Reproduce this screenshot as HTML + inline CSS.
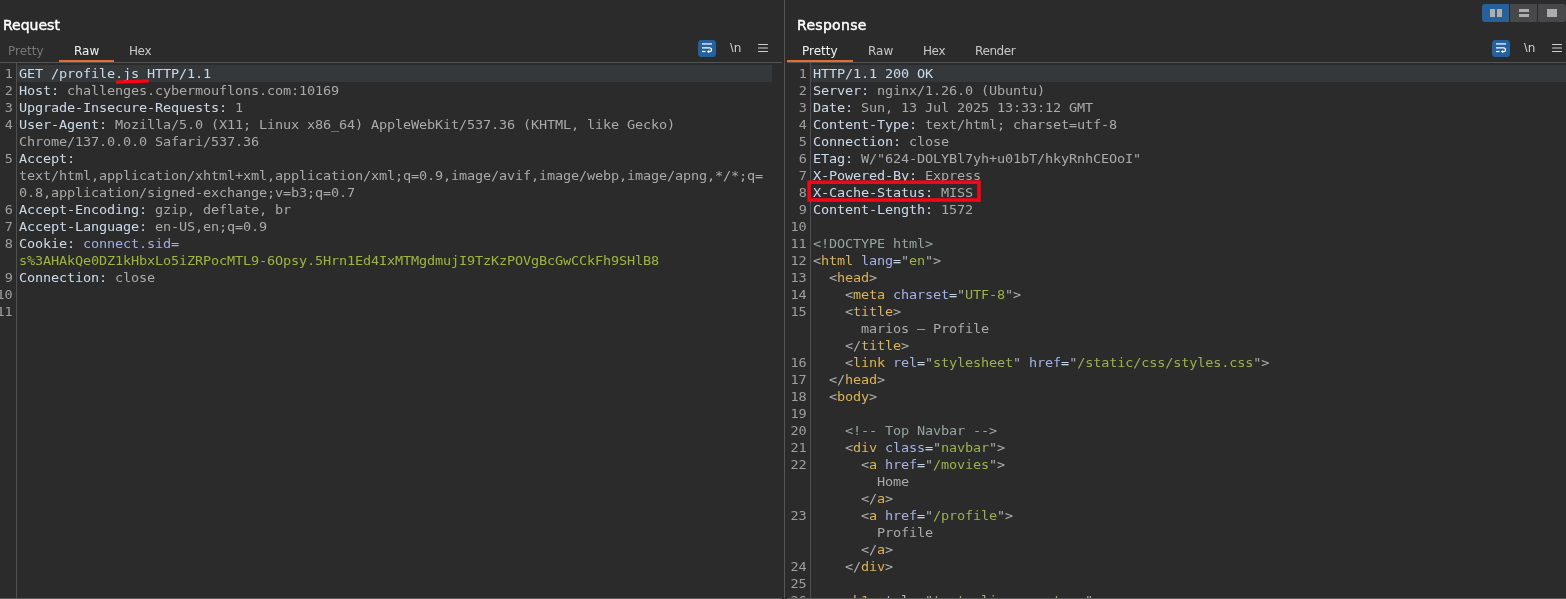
<!DOCTYPE html>
<html lang="en">
<head>
<meta charset="utf-8">
<title>Burp Repeater</title>
<style>
html,body{margin:0;padding:0;}
body{width:1566px;height:599px;background:#2b2b2b;overflow:hidden;position:relative;
  font-family:"DejaVu Sans","Liberation Sans",sans-serif;}
.abs{position:absolute;}
#app{position:absolute;left:0;top:0;width:1566px;height:599px;will-change:transform;}
.title{position:absolute;font-family:"DejaVu Sans","Liberation Sans",sans-serif;font-weight:normal;font-size:14px;line-height:18px;color:#ffffff;-webkit-text-stroke:0.45px #ffffff;white-space:nowrap;}
.tab{position:absolute;font-family:"DejaVu Sans","Liberation Sans",sans-serif;font-size:12px;line-height:14px;color:#c8c8c8;white-space:nowrap;}
.tab.sel{color:#f2f2f2;}
.tab.dis{color:#777777;}
.ul{position:absolute;height:2px;top:60px;background:#e76c2f;}
.hl{position:absolute;background:#34383b;height:17px;top:65px;}
.line{position:absolute;background:#555555;}
.ln,.cl{position:absolute;font-family:"DejaVu Sans Mono","Liberation Mono",monospace;font-size:13px;line-height:17px;letter-spacing:-0.1344px;white-space:pre;height:17px;transform:scaleX(1.04);opacity:0.93;}
.cl{transform-origin:0 0;}
.ln{transform-origin:100% 0;}
.ln{color:#a8a8a8;text-align:right;}
.cl{color:#b8b8b8;}
.h{color:#d6e6f6;}
.v{color:#b4b4b4;}
.ck{color:#a9b8ee;}
.cv{color:#a3c143;}
.p{color:#b9b9b9;}
.t{color:#e8bf5a;}
.a{color:#adbcf3;}
.e{color:#cfe1f2;}
.s{color:#a2bd52;}
.c{color:#9bb1a8;}
</style>
</head>
<body>
<div id="app">
<!-- ================= REQUEST PANEL ================= -->
<div class="title" style="left:3px;top:16px;">Request</div>
<div class="tab dis" style="left:8px;top:44px;">Pretty</div>
<div class="tab sel" style="left:74px;top:44px;">Raw</div>
<div class="tab" style="left:129px;top:44px;letter-spacing:-0.4px;">Hex</div>
<div class="ul" style="left:59px;width:55px;"></div>
<div class="line" style="left:0;top:62px;width:782px;height:1px;"></div>
<div class="hl" style="left:17px;width:755px;"></div>
<div class="line" style="left:16px;top:63px;width:1px;height:535px;background:#505050;"></div>
<!-- toolbar icons (request) -->
<svg class="abs" style="left:698px;top:40px;" width="18" height="17" viewBox="0 0 18 17">
  <rect x="0" y="0" width="18" height="17" rx="3.5" fill="#26619c"/>
  <path d="M4 3.9H14" stroke="#cfe0f2" stroke-opacity="0.85" stroke-width="1.8" fill="none"/>
  <path d="M4 7.75H11.6a1.9 1.9 0 0 1 0 3.8H10.5" stroke="#ffffff" stroke-width="1.25" fill="none"/>
  <path d="M4 11.5H7.5" stroke="#ffffff" stroke-width="1.25" fill="none"/>
  <path d="M8.8 11.55L11.2 9.9V13.2Z" fill="#ffffff"/>
</svg>
<div class="tab" style="left:730px;top:41px;color:#cfcfcf;"><span style="font-family:'Liberation Sans',sans-serif;font-size:13px;">\</span>n</div>
<svg class="abs" style="left:757px;top:42px;" width="12" height="12" viewBox="0 0 12 12">
  <path d="M1.5 2.5H10.5 M1.5 6H10.5 M1.5 9.5H10.5" stroke="#cfcfcf" stroke-width="1.1" stroke-linecap="round"/>
</svg>
<div class="ln" style="top:65px;right:1553.6px">1</div>
<div class="cl" style="top:65px;left:19.4px"><span class="h">GET /profile.js HTTP/1.1</span></div>
<div class="ln" style="top:82px;right:1553.6px">2</div>
<div class="cl" style="top:82px;left:19.4px"><span class="h">Host:</span><span class="v"> challenges.cybermouflons.com:10169</span></div>
<div class="ln" style="top:99px;right:1553.6px">3</div>
<div class="cl" style="top:99px;left:19.4px"><span class="h">Upgrade-Insecure-Requests:</span><span class="v"> 1</span></div>
<div class="ln" style="top:116px;right:1553.6px">4</div>
<div class="cl" style="top:116px;left:19.4px"><span class="h">User-Agent:</span><span class="v"> Mozilla/5.0 (X11; Linux x86_64) AppleWebKit/537.36 (KHTML, like Gecko)</span></div>
<div class="cl" style="top:133px;left:19.4px"><span class="v">Chrome/137.0.0.0 Safari/537.36</span></div>
<div class="ln" style="top:150px;right:1553.6px">5</div>
<div class="cl" style="top:150px;left:19.4px"><span class="h">Accept:</span></div>
<div class="cl" style="top:167px;left:19.4px"><span class="v">text/html,application/xhtml+xml,application/xml;q=0.9,image/avif,image/webp,image/apng,*/*;q=</span></div>
<div class="cl" style="top:184px;left:19.4px"><span class="v">0.8,application/signed-exchange;v=b3;q=0.7</span></div>
<div class="ln" style="top:201px;right:1553.6px">6</div>
<div class="cl" style="top:201px;left:19.4px"><span class="h">Accept-Encoding:</span><span class="v"> gzip, deflate, br</span></div>
<div class="ln" style="top:218px;right:1553.6px">7</div>
<div class="cl" style="top:218px;left:19.4px"><span class="h">Accept-Language:</span><span class="v"> en-US,en;q=0.9</span></div>
<div class="ln" style="top:235px;right:1553.6px">8</div>
<div class="cl" style="top:235px;left:19.4px"><span class="h">Cookie:</span><span class="ck"> connect.sid=</span></div>
<div class="cl" style="top:252px;left:19.4px"><span class="cv">s%3AHAkQe0DZ1kHbxLo5iZRPocMTL9-6Opsy.5Hrn1Ed4IxMTMgdmujI9TzKzPOVgBcGwCCkFh9SHlB8</span></div>
<div class="ln" style="top:269px;right:1553.6px">9</div>
<div class="cl" style="top:269px;left:19.4px"><span class="h">Connection:</span><span class="v"> close</span></div>
<div class="ln" style="top:286px;right:1553.6px">10</div>
<div class="ln" style="top:303px;right:1553.6px">11</div>
<!-- red underline annotation -->
<svg class="abs" style="left:110px;top:74px;" width="46" height="14" viewBox="0 0 46 14">
  <polygon points="6,6.6 39,5.2 39,8.6 6,9.7" fill="#fa0516"/>
</svg>

<!-- ================= DIVIDER ================= -->
<div class="line" style="left:784px;top:0;width:1px;height:599px;background:#565656;"></div>

<!-- ================= RESPONSE PANEL ================= -->
<div class="title" style="left:797px;top:16px;letter-spacing:0.3px;">Response</div>
<div class="tab sel" style="left:802px;top:44px;">Pretty</div>
<div class="tab" style="left:868px;top:44px;">Raw</div>
<div class="tab" style="left:923px;top:44px;letter-spacing:-0.4px;">Hex</div>
<div class="tab" style="left:975px;top:44px;letter-spacing:-0.4px;">Render</div>
<div class="ul" style="left:787px;width:66px;"></div>
<div class="line" style="left:787px;top:62px;width:779px;height:1px;"></div>
<div class="hl" style="left:811px;width:755px;"></div>
<div class="line" style="left:810px;top:63px;width:1px;height:535px;background:#505050;"></div>
<!-- layout buttons -->
<div class="abs" style="left:1482px;top:4px;width:27px;height:18px;background:#26619c;border-radius:3px 0 0 3px;"></div>
<div class="abs" style="left:1510px;top:4px;width:27px;height:18px;background:#48484a;"></div>
<div class="abs" style="left:1538px;top:4px;width:28px;height:18px;background:#48484a;border-radius:0 3px 3px 0;"></div>
<div class="abs" style="left:1490px;top:9px;width:5px;height:8px;background:#b1aeaa;"></div>
<div class="abs" style="left:1497px;top:9px;width:5px;height:8px;background:#b1aeaa;"></div>
<div class="abs" style="left:1519px;top:9px;width:10px;height:3px;background:#adadad;"></div>
<div class="abs" style="left:1519px;top:14px;width:10px;height:3px;background:#adadad;"></div>
<div class="abs" style="left:1547px;top:9px;width:10px;height:8px;background:#adadad;"></div>
<!-- toolbar icons (response) -->
<svg class="abs" style="left:1492px;top:40px;" width="18" height="17" viewBox="0 0 18 17">
  <rect x="0" y="0" width="18" height="17" rx="3.5" fill="#26619c"/>
  <path d="M4 3.9H14" stroke="#cfe0f2" stroke-opacity="0.85" stroke-width="1.8" fill="none"/>
  <path d="M4 7.75H11.6a1.9 1.9 0 0 1 0 3.8H10.5" stroke="#ffffff" stroke-width="1.25" fill="none"/>
  <path d="M4 11.5H7.5" stroke="#ffffff" stroke-width="1.25" fill="none"/>
  <path d="M8.8 11.55L11.2 9.9V13.2Z" fill="#ffffff"/>
</svg>
<div class="tab" style="left:1524px;top:41px;color:#cfcfcf;"><span style="font-family:'Liberation Sans',sans-serif;font-size:13px;">\</span>n</div>
<svg class="abs" style="left:1551px;top:42px;" width="12" height="12" viewBox="0 0 12 12">
  <path d="M1.5 2.5H10.5 M1.5 6H10.5 M1.5 9.5H10.5" stroke="#cfcfcf" stroke-width="1.1" stroke-linecap="round"/>
</svg>
<div class="ln" style="top:65px;right:759.6px">1</div>
<div class="cl" style="top:65px;left:813.4px"><span class="h">HTTP/1.1 200 OK</span></div>
<div class="ln" style="top:82px;right:759.6px">2</div>
<div class="cl" style="top:82px;left:813.4px"><span class="h">Server:</span><span class="v"> nginx/1.26.0 (Ubuntu)</span></div>
<div class="ln" style="top:99px;right:759.6px">3</div>
<div class="cl" style="top:99px;left:813.4px"><span class="h">Date:</span><span class="v"> Sun, 13 Jul 2025 13:33:12 GMT</span></div>
<div class="ln" style="top:116px;right:759.6px">4</div>
<div class="cl" style="top:116px;left:813.4px"><span class="h">Content-Type:</span><span class="v"> text/html; charset=utf-8</span></div>
<div class="ln" style="top:133px;right:759.6px">5</div>
<div class="cl" style="top:133px;left:813.4px"><span class="h">Connection:</span><span class="v"> close</span></div>
<div class="ln" style="top:150px;right:759.6px">6</div>
<div class="cl" style="top:150px;left:813.4px"><span class="h">ETag:</span><span class="v"> W/"624-DOLYBl7yh+u01bT/hkyRnhCEOoI"</span></div>
<div class="ln" style="top:167px;right:759.6px">7</div>
<div class="cl" style="top:167px;left:813.4px"><span class="h">X-Powered-By:</span><span class="v"> Express</span></div>
<div class="ln" style="top:184px;right:759.6px">8</div>
<div class="cl" style="top:184px;left:813.4px"><span class="h">X-Cache-Status:</span><span class="v"> MISS</span></div>
<div class="ln" style="top:201px;right:759.6px">9</div>
<div class="cl" style="top:201px;left:813.4px"><span class="h">Content-Length:</span><span class="v"> 1572</span></div>
<div class="ln" style="top:218px;right:759.6px">10</div>
<div class="ln" style="top:235px;right:759.6px">11</div>
<div class="cl" style="top:235px;left:813.4px"><span class="c">&lt;!DOCTYPE html&gt;</span></div>
<div class="ln" style="top:252px;right:759.6px">12</div>
<div class="cl" style="top:252px;left:813.4px"><span class="p">&lt;</span><span class="t">html</span> <span class="a">lang</span><span class="e">=</span><span class="p">"</span><span class="s">en</span><span class="p">"</span><span class="p">&gt;</span></div>
<div class="ln" style="top:269px;right:759.6px">13</div>
<div class="cl" style="top:269px;left:813.4px">  <span class="p">&lt;</span><span class="t">head</span><span class="p">&gt;</span></div>
<div class="ln" style="top:286px;right:759.6px">14</div>
<div class="cl" style="top:286px;left:813.4px">    <span class="p">&lt;</span><span class="t">meta</span> <span class="a">charset</span><span class="e">=</span><span class="p">"</span><span class="s">UTF-8</span><span class="p">"</span><span class="p">&gt;</span></div>
<div class="ln" style="top:303px;right:759.6px">15</div>
<div class="cl" style="top:303px;left:813.4px">    <span class="p">&lt;</span><span class="t">title</span><span class="p">&gt;</span></div>
<div class="cl" style="top:320px;left:813.4px">      <span class="v">marios — Profile</span></div>
<div class="cl" style="top:337px;left:813.4px">    <span class="p">&lt;/</span><span class="t">title</span><span class="p">&gt;</span></div>
<div class="ln" style="top:354px;right:759.6px">16</div>
<div class="cl" style="top:354px;left:813.4px">    <span class="p">&lt;</span><span class="t">link</span> <span class="a">rel</span><span class="e">=</span><span class="p">"</span><span class="s">stylesheet</span><span class="p">"</span> <span class="a">href</span><span class="e">=</span><span class="p">"</span><span class="s">/static/css/styles.css</span><span class="p">"</span><span class="p">&gt;</span></div>
<div class="ln" style="top:371px;right:759.6px">17</div>
<div class="cl" style="top:371px;left:813.4px">  <span class="p">&lt;/</span><span class="t">head</span><span class="p">&gt;</span></div>
<div class="ln" style="top:388px;right:759.6px">18</div>
<div class="cl" style="top:388px;left:813.4px">  <span class="p">&lt;</span><span class="t">body</span><span class="p">&gt;</span></div>
<div class="ln" style="top:405px;right:759.6px">19</div>
<div class="ln" style="top:422px;right:759.6px">20</div>
<div class="cl" style="top:422px;left:813.4px">    <span class="c">&lt;!-- Top Navbar --&gt;</span></div>
<div class="ln" style="top:439px;right:759.6px">21</div>
<div class="cl" style="top:439px;left:813.4px">    <span class="p">&lt;</span><span class="t">div</span> <span class="a">class</span><span class="e">=</span><span class="p">"</span><span class="s">navbar</span><span class="p">"</span><span class="p">&gt;</span></div>
<div class="ln" style="top:456px;right:759.6px">22</div>
<div class="cl" style="top:456px;left:813.4px">      <span class="p">&lt;</span><span class="t">a</span> <span class="a">href</span><span class="e">=</span><span class="p">"</span><span class="s">/movies</span><span class="p">"</span><span class="p">&gt;</span></div>
<div class="cl" style="top:473px;left:813.4px">        <span class="v">Home</span></div>
<div class="cl" style="top:490px;left:813.4px">      <span class="p">&lt;/</span><span class="t">a</span><span class="p">&gt;</span></div>
<div class="ln" style="top:507px;right:759.6px">23</div>
<div class="cl" style="top:507px;left:813.4px">      <span class="p">&lt;</span><span class="t">a</span> <span class="a">href</span><span class="e">=</span><span class="p">"</span><span class="s">/profile</span><span class="p">"</span><span class="p">&gt;</span></div>
<div class="cl" style="top:524px;left:813.4px">        <span class="v">Profile</span></div>
<div class="cl" style="top:541px;left:813.4px">      <span class="p">&lt;/</span><span class="t">a</span><span class="p">&gt;</span></div>
<div class="ln" style="top:558px;right:759.6px">24</div>
<div class="cl" style="top:558px;left:813.4px">    <span class="p">&lt;/</span><span class="t">div</span><span class="p">&gt;</span></div>
<div class="ln" style="top:575px;right:759.6px">25</div>
<div class="ln" style="top:592px;right:759.6px">26</div>
<div class="cl" style="top:592px;left:813.4px">    <span class="p">&lt;</span><span class="t">h1</span> <span class="a">style</span><span class="e">=</span><span class="p">"</span><span class="s">text-align: center;</span><span class="p">"</span><span class="p">&gt;</span></div>
<!-- red highlight box annotation -->
<svg class="abs" style="left:800px;top:175px;" width="190" height="32" viewBox="0 0 190 32">
  <rect x="9.2" y="7.2" width="169.8" height="17.8" fill="none" stroke="#f40618" stroke-width="3.6"/>
</svg>

<!-- bottom border -->
<div class="line" style="left:0;top:598px;width:782px;height:1px;background:#5c5c5c;"></div>
<div class="line" style="left:787px;top:598px;width:779px;height:1px;background:#5c5c5c;"></div>

</div>
</body>
</html>
